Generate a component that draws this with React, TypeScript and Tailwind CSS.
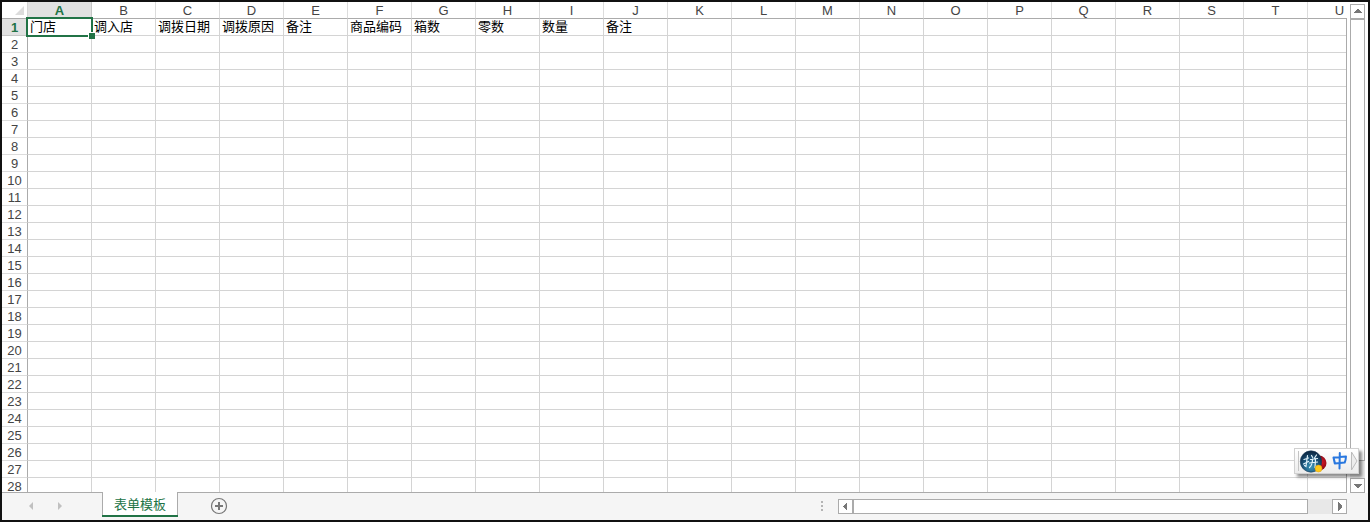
import React from "react";

const columns = "ABCDEFGHIJKLMNOPQRSTU".split("");
const rows = Array.from({ length: 28 }, (_, i) => i + 1);
const titles = ["门店", "调入店", "调拨日期", "调拨原因", "备注", "商品编码", "箱数", "零数", "数量", "备注"];

function ScrollButton({ label, points }: { label: string; points: string }) {
  return (
    <button
      type="button"
      aria-label={label}
      className="flex size-[15px] shrink-0 items-center justify-center border border-[#ababab] bg-white"
    >
      <svg viewBox="0 0 13 13" className="size-[13px] shrink-0" shapeRendering="crispEdges">
        <polygon points={points} fill="#777777" />
      </svg>
    </button>
  );
}

function Sheet() {
  return (
    <table className="w-[1370px] table-fixed border-separate border-spacing-0 text-[13px] leading-[14px] text-[#444444]">
      <colgroup>
        <col className="w-[26px]" />
        {columns.map((c) => (
          <col key={c} className="w-16" />
        ))}
      </colgroup>
      <thead>
        <tr className="h-[17px]">
          <th aria-label="全选" className="border-r border-b border-r-[#d4d4d4] border-b-[#ababab] p-0">
            <svg viewBox="0 0 25 16" className="block h-4 w-[25px]">
              <polygon points="22,4 22,13 13,13" fill="#dcdcdc" />
            </svg>
          </th>
          {columns.map((c, i) => (
            <th
              key={c}
              scope="col"
              className={
                i === 0
                  ? "border-r border-b border-r-[#c6c6c6] border-b-[#ababab] bg-[#e1e1e1] p-0 pt-0.5 font-bold text-[#217346]"
                  : "border-r border-b border-r-[#dcdcdc] border-b-[#ababab] p-0 pt-0.5 font-normal"
              }
            >
              {c}
            </th>
          ))}
        </tr>
      </thead>
      <tbody>
        {rows.map((r) => (
          <tr key={r} className="h-[17px]">
            <th
              scope="row"
              className={
                r === 1
                  ? "border-r border-b border-r-[#ababab] border-b-[#c6c6c6] bg-[#e1e1e1] p-0 pt-0.5 font-bold text-[#217346]"
                  : "border-r border-b border-r-[#ababab] border-b-[#dcdcdc] p-0 pt-0.5 font-normal"
              }
            >
              {r}
            </th>
            {columns.map((c, i) => (
              <td
                key={c}
                className="relative border-r border-b border-[#d4d4d4] p-0 pl-0.5 leading-4 whitespace-nowrap text-black"
              >
                {r === 1 ? titles[i] : null}
                {r === 1 && i === 0 && (
                  <span className="absolute -top-0.5 -right-0.5 -bottom-0.5 -left-0.5 z-10 border-2 border-[#217346]">
                    <span className="absolute -right-1 -bottom-1 size-[7px] border-t border-l border-white bg-[#217346]" />
                  </span>
                )}
              </td>
            ))}
          </tr>
        ))}
      </tbody>
    </table>
  );
}

function InputMethodBar() {
  return (
    <div className="absolute right-[9px] bottom-[46px] z-20 flex h-[26px] w-[65px] items-center border border-[#d0d0d0] bg-linear-to-b from-white to-[#ececec] shadow-[3px_3px_3px_rgba(0,0,0,0.45)]">
      <svg viewBox="0 0 63 24" className="h-6 w-full" role="img" aria-label="拼音输入法 中">
        <defs>
          <radialGradient id="globe" cx="50%" cy="75%" r="70%">
            <stop offset="0" stopColor="#3b96b8" />
            <stop offset="0.55" stopColor="#1b557c" />
            <stop offset="1" stopColor="#0c2844" />
          </radialGradient>
          <radialGradient id="ruby" cx="65%" cy="45%" r="60%">
            <stop offset="0" stopColor="#e01828" />
            <stop offset="1" stopColor="#6d0712" />
          </radialGradient>
        </defs>
        <path d="M3.5 2v20" stroke="#c4c4c4" />
        <circle cx="24" cy="14" r="7.5" fill="url(#ruby)" />
        <circle cx="16" cy="12.5" r="10.7" fill="url(#globe)" stroke="#173b59" strokeWidth="0.6" />
        <path
          d="M9 10.5l4.5-1.5M12.5 6.5l-1.5 11-1.5-1M8.5 15l5-2.5M16.500 6.500l1.200 2M21.500 6l-2 3M15.500 10.500l7-1M14.500 14l8-1M17.500 10q0 6-3 8.500M20.500 9.500l-.5 9"
          fill="none"
          stroke="#e2f3fb"
          strokeWidth="1.2"
          strokeLinecap="round"
        />
        <circle cx="23.5" cy="19.5" r="3.5" fill="#ffca18" stroke="#d79a10" strokeWidth="0.5" />
        <path
          d="M38.5 8.5l12.5-1q-.2 3.5-1.3 6l-9.7 1zM38.5 8.5l1.3 6M44.8 4l-.3 15.5"
          fill="none"
          stroke="#2877df"
          strokeWidth="2"
          strokeLinejoin="round"
          strokeLinecap="round"
        />
        <path d="M56.5 3l5.5 9-5.5 9z" fill="#ececec" stroke="#bcbcbc" />
      </svg>
    </div>
  );
}

export default function App() {
  return (
    <main className="relative flex h-screen flex-col overflow-hidden border-2 border-[#111111] bg-white font-['Liberation_Sans','Noto_Sans_CJK_SC',sans-serif]">
      <div className="flex min-h-0 flex-1">
        <div className="min-w-0 flex-1 overflow-hidden border-b border-[#ababab]">
          <Sheet />
        </div>
        <div className="flex w-[22px] shrink-0">
          <div className="mt-4 w-px bg-[#ababab]" />
          <div className="ml-[3px] flex flex-col pt-0.5">
            <ScrollButton label="向上滚动" points="2,8 6,4 7,4 11,8" />
            <div className="flex min-h-0 flex-1 flex-col bg-[#e8e8e8]">
              <div className="flex-1 border border-[#ababab] bg-white" />
              <div className="h-[17px]" />
            </div>
            <ScrollButton label="向下滚动" points="2,5 11,5 7,9 6,9" />
          </div>
        </div>
      </div>
      <footer className="flex h-[27px] shrink-0 items-start bg-[#f5f5f5]">
        <nav aria-label="工作表" className="flex items-start">
          <div className="flex h-[26px] w-[100px] items-center gap-[18px] pl-[23px]">
            <button type="button" aria-label="上一个工作表" className="size-3">
              <svg viewBox="0 0 12 12" className="size-3">
                <polygon points="8,2 8,10 4,6" fill="#c0c0c0" />
              </svg>
            </button>
            <button type="button" aria-label="下一个工作表" className="size-3">
              <svg viewBox="0 0 12 12" className="size-3">
                <polygon points="3,2 3,10 7,6" fill="#c0c0c0" />
              </svg>
            </button>
          </div>
          <button
            type="button"
            className="-mt-px flex h-[25px] w-[76px] flex-col bg-white text-[13px] leading-[21px] text-[#217346]"
          >
            <span className="h-[23px] w-full border-x border-[#ababab] pt-0.5 text-center">表单模板</span>
            <span className="h-0.5 w-full bg-[#217346]" />
          </button>
          <button type="button" aria-label="新建工作表" className="mt-1 ml-8 size-[18px]">
            <svg viewBox="0 0 18 18" className="size-[18px]" fill="none" stroke="#777777">
              <circle cx="9" cy="9" r="7.5" strokeWidth="1.2" />
              <path d="M9 5v8M5 9h8" strokeWidth="2" />
            </svg>
          </button>
        </nav>
        <div className="mt-1.5 mr-[21px] ml-auto flex h-[15px] w-[527px] items-center">
          <svg viewBox="0 0 4 12" className="mr-3.5 h-3 w-1 shrink-0" fill="#b4b4b4" shapeRendering="crispEdges">
            <path d="M1 0h2v2H1zM1 4h2v2H1zM1 8h2v2H1z" />
          </svg>
          <ScrollButton label="向左滚动" points="8,2 8,11 4,7 4,6" />
          <div className="flex h-full min-w-0 flex-1 bg-[#e8e8e8]">
            <div className="flex-1 border border-[#ababab] bg-white" />
            <div className="w-6" />
          </div>
          <ScrollButton label="向右滚动" points="5,2 9,6 9,7 5,11" />
        </div>
      </footer>
      <InputMethodBar />
    </main>
  );
}
